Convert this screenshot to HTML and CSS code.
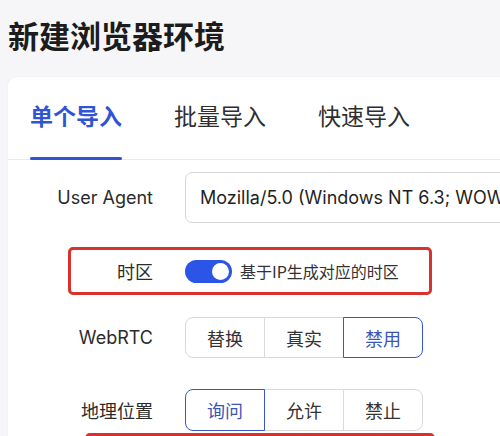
FILE: index.html
```html
<!DOCTYPE html>
<html>
  <head>
    <title>新建浏览器环境</title>
    <link rel="stylesheet" href="styles.css">
  </head>
  <body>
    <h1 class="page-title">新建浏览器环境</h1>

    <div class="card">
      <div class="tabs">
        <div class="tab active">单个导入</div>
        <div class="tab">批量导入</div>
        <div class="tab">快速导入</div>
      </div>

      <div class="form">
        <div class="row row-ua">
          <label class="row-label">User Agent</label>
          <input class="text-input" type="text" value="Mozilla/5.0 (Windows NT 6.3; WOW64) AppleWebKit/537.36" />
        </div>

        <div class="row row-tz marked">
          <label class="row-label">时区</label>
          <div class="switch-wrap">
            <span class="switch on"><span class="knob"></span></span>
            <span class="switch-text">基于IP生成对应的时区</span>
          </div>
        </div>

        <div class="row row-rtc">
          <label class="row-label">WebRTC</label>
          <div class="segmented">
            <button class="seg">替换</button>
            <button class="seg">真实</button>
            <button class="seg selected">禁用</button>
          </div>
        </div>

        <div class="row row-geo">
          <label class="row-label">地理位置</label>
          <div class="segmented">
            <button class="seg selected">询问</button>
            <button class="seg">允许</button>
            <button class="seg">禁止</button>
          </div>
        </div>

        <!-- 下一行只露出红框顶边 -->
        <div class="row row-next marked"></div>
      </div>
    </div>
  </body>
</html>
```

FILE: styles.css
```css
body {
  margin: 0;
  background-color: #f6f6f8;
  font-family: Inter, "Noto Sans CJK SC", sans-serif;
  color: #2b2b2b;
  overflow: hidden;
}
.page-title {
  margin: 0;
  padding: 14px 0 0 8px;
  height: 61px;
  box-sizing: border-box;
  font-size: 31px;
  font-weight: 700;
  line-height: 42px;
  color: #1c1c1c;
  font-family: "Noto Sans CJK SC", sans-serif;
}
.card {
  margin-left: 8px;
  margin-top: 16px;
  width: 520px;
  height: 400px;
  background-color: #ffffff;
  border-radius: 9px 0 0 0;
  box-shadow: 0 0 2px rgba(0, 0, 0, 0.06);
}
.tabs {
  display: flex;
  gap: 52px;
  padding-left: 22px;
  border-bottom: 1px solid #ebebeb;
  height: 83px;
  box-sizing: border-box;
}
.tab {
  font-family: "Noto Sans CJK SC", sans-serif;
  font-size: 23px;
  line-height: 30px;
  padding-top: 23px;
  color: #2e2e2e;
  position: relative;
}
.tab.active {
  color: #2f55d4;
  font-weight: 700;
}
.tab.active::after {
  content: "";
  position: absolute;
  left: 0;
  right: 0;
  bottom: -1px;
  height: 3px;
  border-radius: 2px;
  background-color: #3253d2;
}
.form {
  padding-top: 12px;
}
.row {
  display: grid;
  grid-template-columns: 145px 1fr;
  column-gap: 32px;
  align-items: center;
  position: relative;
}
.row-label {
  text-align: right;
  font-size: 18px;
  color: #2b2b2b;
}
.marked::before {
  content: "";
  position: absolute;
  left: 60px;
  width: 358px;
  top: 0;
  bottom: 0;
  border: 3px solid #d7322b;
  border-radius: 5px;
}
.row-ua {
  height: 51px;
}
.text-input {
  height: 51px;
  box-sizing: border-box;
  border: 1px solid #d6d6d6;
  border-radius: 7px;
  padding: 0 14px;
  font-family: Inter, sans-serif;
  font-size: 18px;
  color: #1f1f1f;
  width: 100%;
}
.row-tz {
  height: 48px;
  margin-top: 24px;
}
.switch-wrap {
  display: flex;
  align-items: center;
  gap: 8px;
}
.switch {
  width: 47px;
  height: 23px;
  border-radius: 12px;
  background-color: #2a55e6;
  position: relative;
  display: inline-block;
}
.knob {
  position: absolute;
  right: 3px;
  top: 3px;
  width: 17px;
  height: 17px;
  border-radius: 50%;
  background-color: #ffffff;
}
.switch-text {
  font-family: "Noto Sans CJK SC", sans-serif;
  font-size: 16px;
  color: #333333;
}
.row-rtc {
  height: 41px;
  margin-top: 22px;
}
.row-geo {
  height: 42px;
  margin-top: 31px;
}
.row-next {
  height: 48px;
  margin-top: 2px;
}
.row-next::before {
  left: 77px;
  width: 344px;
}
.segmented {
  display: flex;
  width: 238px;
  height: 100%;
}
.seg {
  flex: 1;
  background-color: #ffffff;
  border: 1px solid #d9d9d9;
  margin-left: -1px;
  font-family: "Noto Sans CJK SC", sans-serif;
  font-size: 18px;
  color: #333333;
  padding: 0;
}
.seg:first-child {
  margin-left: 0;
  border-radius: 8px 0 0 8px;
}
.seg:last-child {
  border-radius: 0 8px 8px 0;
}
.seg.selected {
  border-color: #3a56c6;
  color: #3a55b6;
  position: relative;
}
```
